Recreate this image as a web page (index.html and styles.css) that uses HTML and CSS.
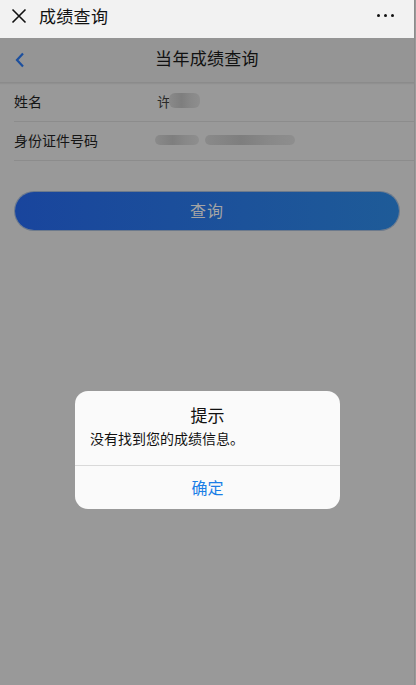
FILE: index.html
```html
<!DOCTYPE html>
<html lang="zh">
<head>
<meta charset="utf-8">
<link rel="stylesheet" href="styles.css">
</head>
<body>
<div class="app">
  <header class="topbar">
    <svg class="close" width="16" height="16" viewBox="0 0 16 16"><path d="M1.5 1.5L14.5 14.5M14.5 1.5L1.5 14.5" stroke="#111" stroke-width="1.6" fill="none"/></svg>
    <span class="top-title">成绩查询</span>
    <span class="more"><i></i><i></i><i></i></span>
  </header>
  <div class="dimmed">
    <nav class="navbar">
      <svg class="back" width="10" height="16" viewBox="0 0 10 16"><path d="M8 1.5L2 8L8 14.5" stroke="#1c4f9e" stroke-width="2.2" fill="none"/></svg>
      <span class="nav-title">当年成绩查询</span>
    </nav>
    <div class="form">
      <div class="row">
        <span class="label">姓名</span>
        <span class="value">许<span class="blur b1"></span></span>
      </div>
      <div class="row">
        <span class="label">身份证件号码</span>
        <span class="value"><span class="blur b2"></span><span class="blur b3"></span></span>
      </div>
    </div>
    <div class="btn-wrap"><div class="btn">查询</div></div>
  </div>
  <div class="edge"></div>
  <div class="dialog">
    <div class="dlg-body">
      <div class="dlg-title">提示</div>
      <div class="dlg-msg">没有找到您的成绩信息。</div>
    </div>
    <div class="dlg-btn">确定</div>
  </div>
</div>
</body>
</html>
```
FILE: styles.css
```css
* { box-sizing: border-box; margin: 0; padding: 0; }
html, body { width: 416px; height: 685px; overflow: hidden; }
body { font-family: "Noto Sans CJK SC", "Noto Sans", sans-serif; background: #999; }
.app { position: relative; width: 416px; height: 685px; display: flex; flex-direction: column; }
.topbar { height: 38px; background: #f2f2f2; display: flex; align-items: center; padding-left: 11px; padding-bottom: 7px; position: relative; width: 414px; }
.close { margin-right: 12px; }
.top-title { font-size: 17px; color: #111; line-height: 20px; letter-spacing: 0.3px; }
.more { margin-left: auto; margin-right: 20px; display: flex; gap: 4px; }
.more i { width: 3px; height: 3px; background: #111; border-radius: 50%; display: block; }
.dimmed { flex: 1; background: #999; width: 414px; }
.navbar { height: 44px; background: #959595; display: flex; align-items: center; justify-content: center; position: relative; padding-bottom: 5px; box-shadow: 0 1px 0 #8b8b8b, 0 2px 1px rgba(0,0,0,0.06); }
.back { position: absolute; left: 15px; top: 14px; }
.nav-title { font-size: 17px; color: #111; letter-spacing: 0.3px; line-height: 20px; }
.form { padding-left: 14px; margin-top: 0; }
.row { height: 39px; display: flex; align-items: center; border-bottom: 1px solid #8c8c8c; padding-bottom: 2px; }
.row:first-child { height: 40px; }
.label { width: 143px; font-size: 14px; color: #151515; line-height: 18px; }
.value { font-size: 14px; color: #2a2a2a; display: flex; align-items: center; line-height: 18px; }
.blur { display: inline-block; height: 13px; border-radius: 6px; background: linear-gradient(90deg, #8a8a8a, #7e7e7e 40%, #888 70%, #8e8e8e); filter: blur(0.6px); }
.b1 { width: 31px; height: 15px; margin-left: -2px; }
.b2 { width: 44px; height: 10px; margin-left: -2px; }
.b3 { width: 90px; height: 10px; margin-left: 6px; }
.btn-wrap { padding: 31px 15px 0 15px; }
.btn { height: 38px; border-radius: 19px; background: linear-gradient(90deg, #19459d, #1e5b98); color: #a4a4a4; font-size: 16px; line-height: 20px; padding-bottom: 3px; display: flex; align-items: center; justify-content: center; letter-spacing: 1px; box-shadow: 0 0 0 1px #6d7a8c; }
.edge { position: absolute; right: 0; top: 0; width: 2px; height: 685px; background: #9a9a9a; border-left: 1px solid #8c8c8c; }
.dialog { position: absolute; left: 75px; top: 391px; width: 265px; height: 118px; background: #fafafa; border-radius: 13px; display: flex; flex-direction: column; overflow: hidden; }
.dlg-body { height: 75px; border-bottom: 1px solid #d9d9d9; padding-top: 12px; }
.dlg-title { font-size: 17px; color: #111; text-align: center; line-height: 24px; }
.dlg-msg { font-size: 14px; color: #111; padding-left: 15px; line-height: 20px; margin-top: 1px; }
.dlg-btn { flex: 1; display: flex; align-items: center; justify-content: center; color: #1a7ee6; font-size: 16px; line-height: 20px; padding-bottom: 2px; }
```
